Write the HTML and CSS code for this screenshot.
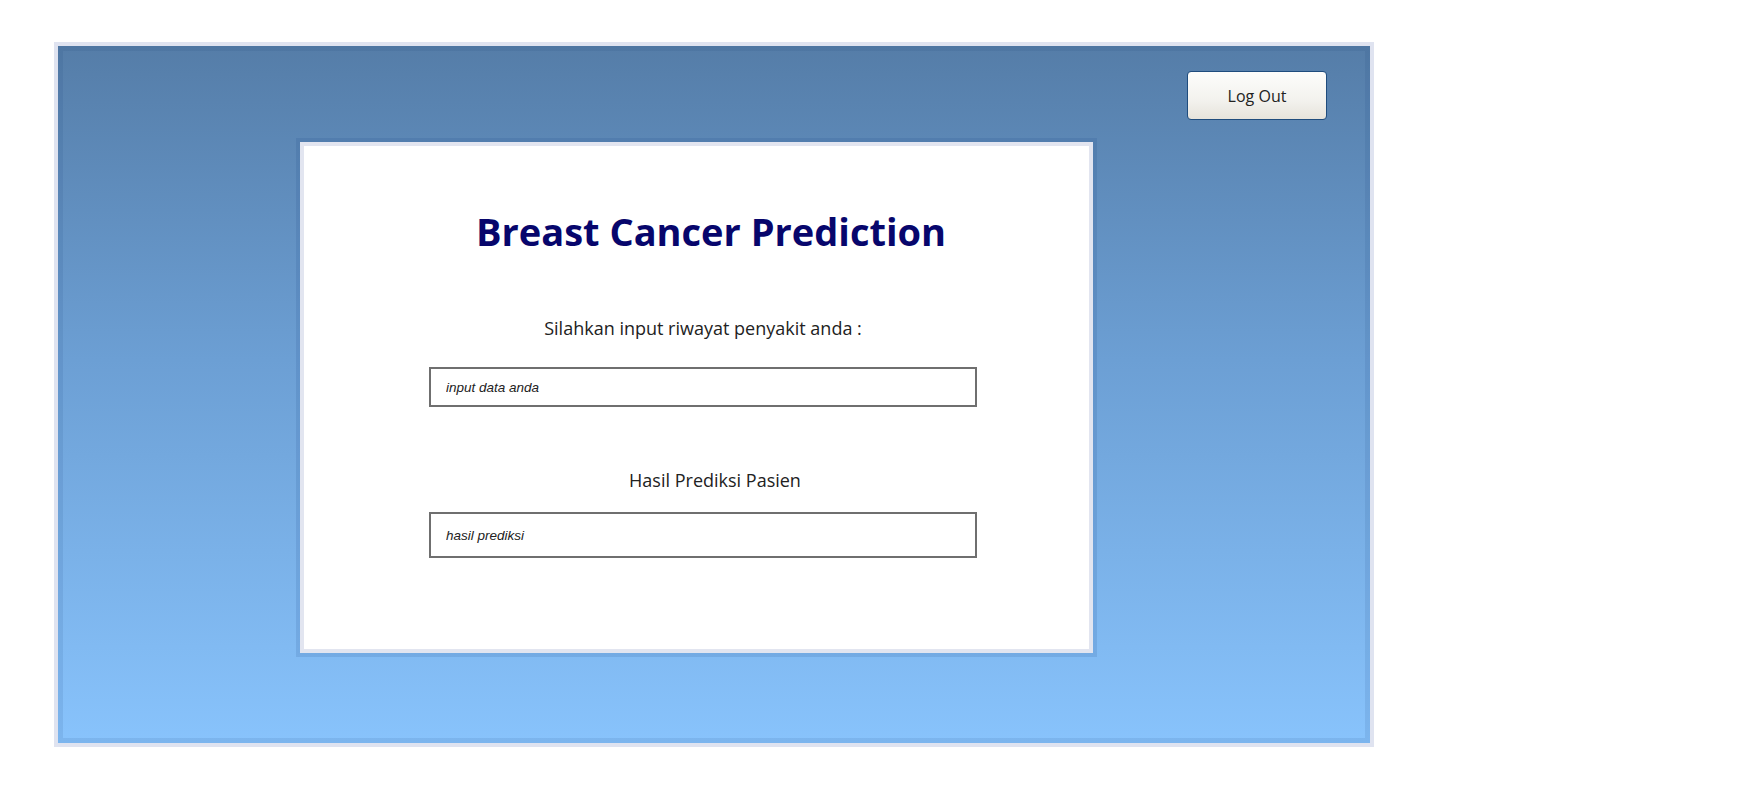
FILE: index.html
```html
<!DOCTYPE html>
<html lang="id">
<head>
<meta charset="utf-8">
<title>Breast Cancer Prediction</title>
<link rel="stylesheet" href="styles.css">
</head>
<body>
<div class="frame">
  <div class="frame-inner">
    <div class="topbar">
      <button class="logout" type="button">Log Out</button>
    </div>
    <div class="card">
      <div class="card-body">
        <h1 class="title">Breast Cancer Prediction</h1>
        <p class="label label-input">Silahkan input riwayat penyakit anda :</p>
        <input class="field field-input" type="text" placeholder="input data anda">
        <p class="label label-result">Hasil Prediksi Pasien</p>
        <input class="field field-result" type="text" placeholder="hasil prediksi">
      </div>
    </div>
  </div>
</div>
</body>
</html>
```

FILE: styles.css
```css
html, body {
  margin: 0;
  padding: 0;
  background: #ffffff;
}

body {
  font-family: "Open Sans", "Noto Sans", sans-serif;
}

.frame {
  margin: 42px 0 0 54px;
  width: 1320px;
  height: 705px;
  box-sizing: border-box;
  border: 4px solid #dfe3f0;
  background: linear-gradient(to bottom, #557da8 0%, #6c9fd4 45%, #88c3fc 100%);
}

.frame-inner {
  height: 100%;
  box-sizing: border-box;
  border: 5px solid rgba(20, 55, 120, 0.10);
  padding-top: 20px;
}

.topbar {
  display: flex;
  justify-content: flex-end;
  padding-right: 38px;
}

.logout {
  width: 140px;
  height: 49px;
  border: 1px solid #1f4c7d;
  border-radius: 4px;
  background: linear-gradient(to bottom, #fdfdfb 0%, #f3f2ee 60%, #e6e3db 100%);
  font-family: "Open Sans", "Noto Sans", sans-serif;
  font-size: 16px;
  color: #222222;
  padding: 0;
}

.card {
  margin: 18px 0 0 233px;
  width: 801px;
  height: 519px;
  box-sizing: border-box;
  border: 4px solid rgba(20, 55, 120, 0.12);
}

.card-body {
  height: 100%;
  box-sizing: border-box;
  border: 4px solid #e2e5f0;
  background: #ffffff;
  display: flex;
  flex-direction: column;
  align-items: flex-start;
  padding-left: 125px;
}

.title {
  margin: 60px 0 0 0;
  width: 548px;
  padding-left: 16px;
  box-sizing: border-box;
  text-align: center;
  font-size: 38px;
  line-height: 50px;
  font-weight: 700;
  color: #07066c;
}

.label {
  margin: 0;
  width: 548px;
  text-align: center;
  font-size: 18px;
  line-height: 26px;
  color: #222222;
  box-sizing: border-box;
}

.label-input {
  margin-top: 59px;
}

.label-result {
  margin-top: 60px;
  padding-left: 24px;
}

.field {
  width: 548px;
  box-sizing: border-box;
  border: 2px solid #6f6f6f;
  background: #ffffff;
  padding: 0 0 0 15px;
  font-family: "Liberation Sans", Arial, sans-serif;
  font-style: italic;
  font-size: 13.5px;
  color: #222222;
  outline: none;
}

.field::placeholder {
  color: #222222;
  opacity: 1;
  font-style: italic;
}

.field-input {
  margin-top: 26px;
  height: 40px;
}

.field-result {
  margin-top: 19px;
  height: 46px;
}
```
